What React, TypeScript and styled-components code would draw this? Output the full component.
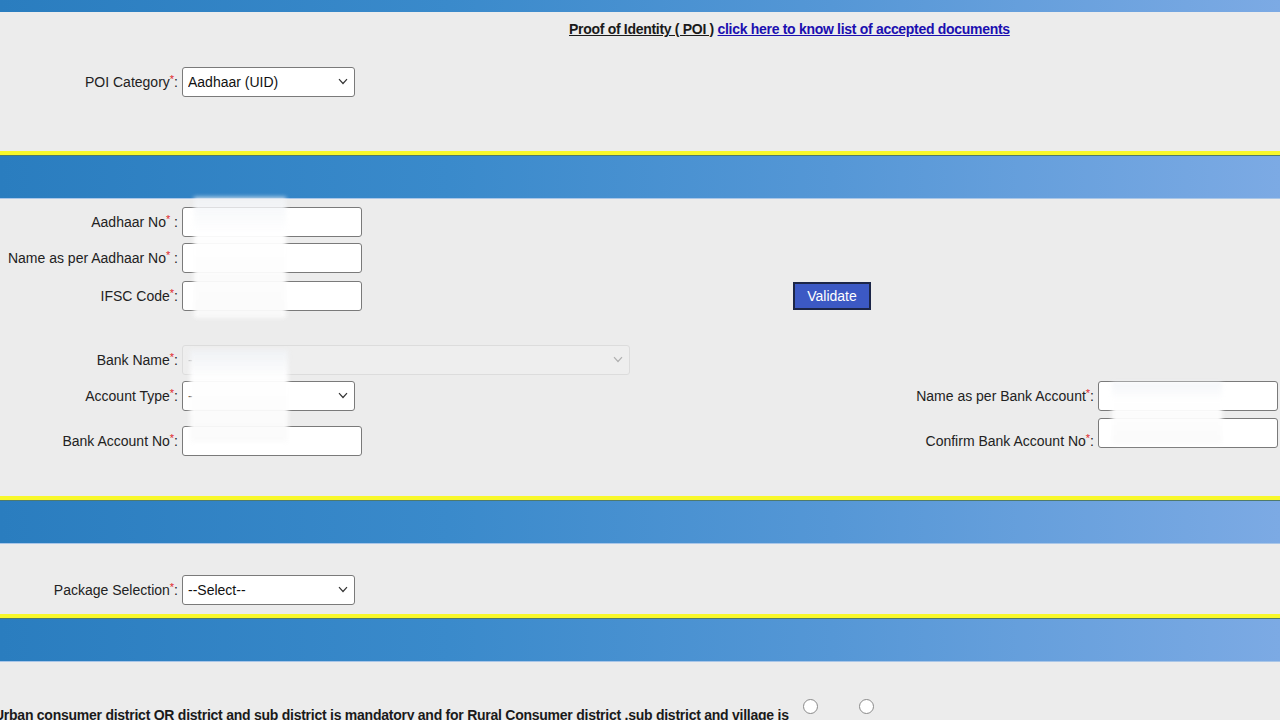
import React from "react";
import styled, { createGlobalStyle } from "styled-components";

const GlobalStyle = createGlobalStyle`
  html, body {
    margin: 0;
    padding: 0;
    background: #ececec;
    overflow: hidden;
  }
  body {
    font-family: "Liberation Sans", Arial, sans-serif;
    font-size: 14px;
    color: #222;
  }
`;

const Page = styled.div`
  position: relative;
  width: 1280px;
  height: 720px;
  overflow: hidden;
  background: #ececec;
`;

const BLUE = "linear-gradient(90deg, #2a7dbf 0%, #3a8acb 35%, #5597d6 65%, #7caae4 100%)";

const TopBar = styled.div`
  height: 12px;
  background: ${BLUE};
`;

const Band = styled.div`
  border-top: 4px solid #f8f82a;
  box-shadow: inset 0 1px 0 #4f7a6a;
  height: 43px;
  background: ${BLUE};
  border-bottom: 1px solid #a9c6e8;
`;

const Section = styled.section<{ $h: number; $pt?: number }>`
  height: ${(p) => p.$h}px;
  padding-top: ${(p) => p.$pt ?? 0}px;
  box-sizing: border-box;
`;

const Heading = styled.div`
  padding: 9px 0 0 569px;
  font-weight: bold;
  line-height: 16px;
  letter-spacing: -0.3px;
  white-space: nowrap;
`;

const Underlined = styled.span`
  text-decoration: underline;
  color: #1a1a1a;
`;

const DocLink = styled.a`
  color: #1b0fb0;
  text-decoration: underline;
  cursor: pointer;
`;

const Row = styled.div<{ $mt?: number }>`
  display: flex;
  align-items: center;
  margin-top: ${(p) => p.$mt ?? 0}px;
  height: 30px;
`;

const Label = styled.label<{ $w?: number }>`
  width: ${(p) => p.$w ?? 178}px;
  margin-right: 4px;
  text-align: right;
  white-space: nowrap;
  color: #222;
`;

const Star = styled.span`
  color: #e0262b;
  font-size: 11px;
  vertical-align: top;
  position: relative;
  top: -1px;
`;

const TextInput = styled.input<{ $w?: number }>`
  box-sizing: border-box;
  width: ${(p) => p.$w ?? 180}px;
  height: 30px;
  border: 1px solid #7a7a7a;
  border-radius: 3px;
  background: #fff;
  font: inherit;
  padding: 0 6px;
  outline: none;
`;

const SelectWrap = styled.div<{ $w?: number }>`
  position: relative;
  width: ${(p) => p.$w ?? 173}px;
  height: 30px;
`;

const Select = styled.select<{ disabled?: boolean }>`
  appearance: none;
  box-sizing: border-box;
  width: 100%;
  height: 30px;
  border: 1px solid ${(p) => (p.disabled ? "#d6d6d6" : "#7a7a7a")};
  border-radius: 3px;
  background: ${(p) => (p.disabled ? "#efefef" : "#fff")};
  color: ${(p) => (p.disabled ? "#9a9a9a" : "#111")};
  font: inherit;
  padding: 0 24px 0 5px;
  outline: none;
`;

const Chevron = styled.svg<{ $light?: boolean }>`
  position: absolute;
  right: 7px;
  top: 11px;
  width: 10px;
  height: 7px;
  pointer-events: none;
  stroke: ${(p) => (p.$light ? "#b0b0b0" : "#333")};
`;

const ValidateButton = styled.button`
  margin-left: 431px;
  width: 78px;
  height: 28px;
  background: #3c59c4;
  color: #fff;
  border: 2px solid #1c2647;
  font: inherit;
  font-size: 14px;
  padding: 0;
  cursor: pointer;
`;

const BankArea = styled.div`
  display: flex;
  justify-content: space-between;
  margin-top: 34px;
`;

const Column = styled.div<{ $pt?: number }>`
  display: flex;
  flex-direction: column;
  padding-top: ${(p) => p.$pt ?? 0}px;
`;

const RightRow = styled.div<{ $mt?: number }>`
  display: flex;
  align-items: center;
  justify-content: flex-end;
  margin-top: ${(p) => p.$mt ?? 0}px;
  height: 30px;
  padding-right: 2px;
`;

const ConfirmLabel = styled(Label)`
  padding-top: 16px;
`;

const NoteRow = styled.div`
  display: flex;
  align-items: flex-end;
  margin-top: 37px;
  margin-left: -6px;
  white-space: nowrap;
`;

const Note = styled.span`
  font-weight: bold;
  letter-spacing: -0.25px;
  color: #1a1a1a;
`;

const Radio = styled.span<{ $ml: number }>`
  display: inline-block;
  width: 13px;
  height: 13px;
  border: 1px solid #8a8a8a;
  border-radius: 50%;
  background: #fff;
  margin-left: ${(p) => p.$ml}px;
  margin-bottom: 9px;
`;

const Redaction = styled.div<{ $x: number; $y: number; $w: number; $h: number }>`
  position: absolute;
  left: ${(p) => p.$x}px;
  top: ${(p) => p.$y}px;
  width: ${(p) => p.$w}px;
  height: ${(p) => p.$h}px;
  background: linear-gradient(180deg, rgba(240, 243, 247, 0.75), rgba(255, 255, 255, 0.95) 30%, rgba(250, 250, 250, 0.95));
  filter: blur(2px);
  pointer-events: none;
`;

const Req: React.FC<{ text: string; sep?: string }> = ({ text, sep = ":" }) => (
  <>
    {text}
    <Star>*</Star>
    {sep}
  </>
);

const DropDown: React.FC<{ value: string; w?: number; disabled?: boolean }> = ({ value, w, disabled }) => (
  <SelectWrap $w={w}>
    <Select disabled={disabled} defaultValue={value}>
      <option>{value}</option>
    </Select>
    <Chevron $light={disabled} viewBox="0 0 10 7" fill="none" strokeWidth="1.2">
      <path d="M1 1.2 L5 5.5 L9 1.2" />
    </Chevron>
  </SelectWrap>
);

const App: React.FC = () => {
  return (
    <Page>
      <GlobalStyle />
      <TopBar />
      <Section $h={139}>
        <Heading>
          <Underlined>Proof of Identity ( POI )</Underlined>{" "}
          <DocLink>click here to know list of accepted documents</DocLink>
        </Heading>
        <Row $mt={30}>
          <Label>
            <Req text="POI Category" />
          </Label>
          <DropDown value="Aadhaar (UID)" />
        </Row>
      </Section>
      <Band />
      <Section $h={297} $pt={8}>
        <Row>
          <Label>
            <Req text="Aadhaar No" sep=" :" />
          </Label>
          <TextInput />
        </Row>
        <Row $mt={6}>
          <Label>
            <Req text="Name as per Aadhaar No" sep=" :" />
          </Label>
          <TextInput />
        </Row>
        <Row $mt={8}>
          <Label>
            <Req text="IFSC Code" />
          </Label>
          <TextInput />
          <ValidateButton>Validate</ValidateButton>
        </Row>
        <BankArea>
          <Column>
            <Row>
              <Label>
                <Req text="Bank Name" />
              </Label>
              <DropDown value="-" w={448} disabled />
            </Row>
            <Row $mt={6}>
              <Label>
                <Req text="Account Type" />
              </Label>
              <DropDown value="-" />
            </Row>
            <Row $mt={15}>
              <Label>
                <Req text="Bank Account No" />
              </Label>
              <TextInput />
            </Row>
          </Column>
          <Column $pt={36}>
            <RightRow>
              <Label $w={200}>
                <Req text="Name as per Bank Account" />
              </Label>
              <TextInput />
            </RightRow>
            <RightRow $mt={7}>
              <ConfirmLabel $w={200}>
                <Req text="Confirm Bank Account No" />
              </ConfirmLabel>
              <TextInput />
            </RightRow>
          </Column>
        </BankArea>
      </Section>
      <Band />
      <Section $h={70} $pt={31}>
        <Row>
          <Label>
            <Req text="Package Selection" />
          </Label>
          <DropDown value="--Select--" />
        </Row>
      </Section>
      <Band />
      <NoteRow>
        <Note>
          Urban consumer district OR district and sub district is mandatory and for Rural Consumer district ,sub district and village is
        </Note>
        <Radio $ml={14} />
        <Radio $ml={41} />
      </NoteRow>
      <Redaction $x={194} $y={197} $w={92} $h={121} />
      <Redaction $x={190} $y={350} $w={98} $h={92} />
      <Redaction $x={1112} $y={382} $w={110} $h={62} />
    </Page>
  );
};

export default App;
